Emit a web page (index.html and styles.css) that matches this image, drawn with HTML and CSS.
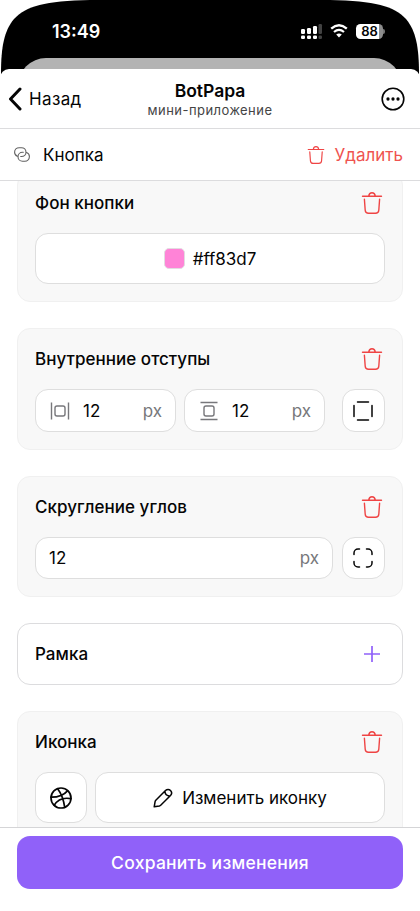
FILE: index.html
```html
<!DOCTYPE html>
<html lang="ru">
<head>
<meta charset="utf-8">
<meta name="viewport" content="width=device-width, initial-scale=1">
<title>BotPapa</title>
<link rel="stylesheet" href="styles.css">
</head>
<body>
<svg class="defs" aria-hidden="true">
  <symbol id="trash" viewBox="0 0 22 24">
    <path d="M1.500 5.300h19M7.700 5.100C8 2.900 9.200 1.700 11 1.700s3 1.200 3.300 3.400M3.400 8.200l.8 11c.2 2.200 1.100 3.100 3.300 3.100h7c2.200 0 3.100-.9 3.300-3.100l.8-11"/>
  </symbol>
</svg>
<div class="phone">
  <div class="status-area">
    <div class="status-bar">
      <span class="time">13:49</span>
      <div class="indicators">
        <svg class="signal" viewBox="0 0 22 16">
          <g fill="#fff"><rect x="0" y="5" width="4" height="5" rx="1.300"/><rect x="6" y="4" width="4" height="6" rx="1.300"/><rect x="12" y="2" width="4" height="8" rx="1.300"/><rect x="0" y="11.500" width="4" height="3.500" rx="1.300"/><rect x="6" y="11.500" width="4" height="3.500" rx="1.300"/><rect x="12" y="11.500" width="4" height="3.500" rx="1.300"/></g>
          <g fill="#424242"><rect x="17.500" y="0" width="3.500" height="10" rx="1.300"/><rect x="17.500" y="11.500" width="3.500" height="3.500" rx="1.300"/></g>
        </svg>
        <svg class="wifi" viewBox="0 0 18 14">
          <path d="M1.200 4.700Q9-2 16.800 4.700" stroke-width="2.400"/><path d="M4 8q5-4.300 10 0" stroke-width="2.200"/><path d="M6.200 10.600Q9 8.400 11.800 10.600L9 13.600z" class="wifi-dot"/>
        </svg>
        <div class="battery"><span>88</span></div><i class="battery-cap"></i>
      </div>
    </div>
    <div class="back-sheet"></div>
  </div>
  <header class="header">
    <div class="back">
      <svg viewBox="0 0 14 24"><path d="M12 2 2.500 12l9.500 10"/></svg>
      <span>Назад</span>
    </div>
    <div class="heading">
      <h1>BotPapa</h1>
      <p>мини-приложение</p>
    </div>
    <svg class="more" viewBox="0 0 24 24"><circle cx="12" cy="12" r="10.800"/><g><circle cx="7" cy="12" r="1.650"/><circle cx="12" cy="12" r="1.650"/><circle cx="17" cy="12" r="1.650"/></g></svg>
  </header>
  <div class="toolbar">
    <svg class="link" viewBox="0 0 16 15"><path d="M3.500 9.300C1.600 8.600.6 7 .6 5.200.6 2.700 2.600.7 5.200.7h2.300c2.500 0 4.500 2 4.500 4.500S10 9.500 7.500 9.500H6.700"/><path d="M12.500 5.500c1.900.7 2.900 2.200 2.900 4 0 2.700-2 4.700-4.600 4.700H8.500C6 14.200 4 12.200 4 9.700s2-4.400 4.500-4.400h.8"/></svg>
    <span class="toolbar-name">Кнопка</span>
    <svg class="trash"><use href="#trash"/></svg>
    <span class="toolbar-delete">Удалить</span>
  </div>
  <main class="content">
    <section class="card card-clipped">
      <div class="card-head"><h2>Фон кнопки</h2><svg class="trash"><use href="#trash"/></svg></div>
      <div class="field color-field tall"><i class="swatch"></i><span>#ff83d7</span></div>
    </section>
    <section class="card">
      <div class="card-head"><h2>Внутренние отступы</h2><svg class="trash"><use href="#trash"/></svg></div>
      <div class="row paddings">
        <div class="field"><svg class="pad-icon" viewBox="0 0 20 20"><path d="M1.500 1.500v17M18.500 1.500v17"/><rect x="5" y="5" width="10" height="10" rx="2"/></svg><span>12</span><em>px</em></div>
        <div class="field"><svg class="pad-icon" viewBox="0 0 20 20"><path d="M1.500 1.500h17M1.500 18.500h17"/><rect x="5" y="5" width="10" height="10" rx="2"/></svg><span>12</span><em>px</em></div>
        <div class="field square"><svg class="side-icon" viewBox="0 0 20 20"><path d="M4.500 1h11M4.500 19h11M1 4.500v11M19 4.500v11"/></svg></div>
      </div>
    </section>
    <section class="card">
      <div class="card-head"><h2>Скругление углов</h2><svg class="trash"><use href="#trash"/></svg></div>
      <div class="row radius-row">
        <div class="field wide"><span>12</span><em>px</em></div>
        <div class="field square"><svg class="side-icon" viewBox="0 0 20 20"><path d="M1 6.500V5a4 4 0 0 1 4-4h1.500M13.500 1H15a4 4 0 0 1 4 4v1.500M19 13.500V15a4 4 0 0 1-4 4h-1.500M6.500 19H5a4 4 0 0 1-4-4v-1.500"/></svg></div>
      </div>
    </section>
    <section class="card card-empty">
      <div class="card-head"><h2>Рамка</h2><svg class="plus" viewBox="0 0 22 22"><path d="M11 3v16M3 11h16"/></svg></div>
    </section>
    <section class="card">
      <div class="card-head"><h2>Иконка</h2><svg class="trash"><use href="#trash"/></svg></div>
      <div class="row icon-row">
        <div class="field square tall"><svg class="ball" viewBox="0 0 22 22"><circle cx="11" cy="11" r="10"/><path d="M7.600 1.700C11 6 13.500 12 14.700 20.300M1 10.200c6.500.1 12.200-1.300 16.500-6.300M4.200 18.300c3.600-6 9-8.100 16.800-6.600"/></svg></div>
        <div class="field change tall"><svg class="pencil" viewBox="0 0 20 20"><path d="M1.200 18.800l.9-5.200c.1-.5.3-.9.7-1.300L12.500 2.500c1.500-1.500 3.600-1.500 5 0s1.400 3.500 0 5L7.700 17.200c-.4.4-.8.600-1.300.7zM11.900 3.200c.2 2.900 2 4.700 4.900 4.900"/></svg><span>Изменить иконку</span></div>
      </div>
    </section>
  </main>
  <footer class="footer"><button>Сохранить изменения</button></footer>
</div>
</body>
</html>
```
FILE: styles.css
```css
* { box-sizing: border-box; margin: 0; }
body { font-family: Inter, "Liberation Sans", sans-serif; font-size: 17px; color: #050505; background: #fff; overflow: hidden; }
svg { display: block; flex: none; fill: none; stroke: currentColor; stroke-linecap: round; stroke-linejoin: round; }
.defs { width: 0; height: 0; position: absolute; }
.phone { width: 420px; height: 911px; display: flex; flex-direction: column; }
.status-area { height: 84px; flex: none; background: #000; clip-path: path("M1 84V74C1 47 4 31 14 19C26 6 45 1 90 0H330C375 1 394 6 406 19C416 31 419 47 419 74V84Z"); overflow: hidden; }
.status-bar { height: 58px; display: flex; justify-content: space-between; align-items: flex-start; padding: 23px 35px 0 52px; }
.time { color: #fff; font-size: 18px; line-height: 18px; font-weight: 600; }
.indicators { display: flex; align-items: flex-start; padding-top: 1px; }
.signal { width: 22px; height: 16px; stroke: none; margin-right: 7px; }
.wifi { width: 18px; height: 14px; margin: 0 8px 0 0; stroke: #fff; stroke-linecap: butt; }
.wifi .wifi-dot { fill: #fff; stroke: none; }
.battery { width: 27px; height: 15px; border-radius: 4.500px; background: linear-gradient(90deg, #fff 86%, #8c8c8c 86%); font-size: 13px; font-weight: 600; line-height: 15px; text-align: center; }
.battery-cap { width: 2px; height: 5px; margin: 5px 0 0 0; background: #777; border-radius: 0 2px 2px 0; }
.back-sheet { height: 40px; margin: 0 18px; background: #b3b3b3; border-radius: 28px 28px 0 0; }
.header { height: 60px; flex: none; margin-top: -15px; background: #fff; border-radius: 9px 9px 0 0; border-bottom: 1px solid #dcdcde; display: grid; grid-template-columns: 1fr auto 1fr; align-items: center; padding: 0 15px 0 8px; position: relative; }
.back { display: flex; align-items: center; gap: 7px; }
.back svg { width: 14px; height: 24px; stroke-width: 3px; }
.back span { font-size: 17px; letter-spacing: .35px; }
.heading { text-align: center; margin-left: 7px; padding-top: 3px; }
h1 { font-size: 17.500px; line-height: 20px; font-weight: 600; }
.heading p { font-size: 13px; line-height: 18px; color: #444; letter-spacing: .45px; }
.more { width: 24px; height: 24px; justify-self: end; stroke-width: 1.600px; }
.more g { fill: currentColor; stroke: none; }
.toolbar { height: 52px; flex: none; background: #fff; border-bottom: 1px solid #dcdcde; display: flex; align-items: center; padding: 0 17px 0 14px; }
.link { width: 16px; height: 15px; color: #606060; stroke-width: 1.100px; margin-right: 13px; }
.toolbar-name { flex: 1; font-size: 17px; }
.trash { width: 22px; height: 24px; color: #ef4444; stroke-width: 1.400px; }
.toolbar .trash { width: 18px; height: 20px; margin-right: 10px; }
.toolbar-delete { color: #ef5350; font-size: 17px; }
.content { flex: 1; min-height: 0; overflow: hidden; padding: 0 17px; }
.card { border: 1px solid #f0f0f0; background: #f8f8f8; border-radius: 13px; padding: 17px; margin-bottom: 26px; }
.card-clipped { margin-top: -9px; }
.card-head { height: 26px; display: flex; align-items: center; justify-content: space-between; margin-bottom: 17px; }
.card-head .trash { margin-right: 2px; }
h2 { font-size: 17px; line-height: 24px; font-weight: 500; letter-spacing: .03px; white-space: nowrap; }
.card-empty { height: 62px; background: #fff; border-color: #dcdcde; }
.card-empty .card-head { margin: 0; }
.plus { width: 22px; height: 22px; color: #9061f9; stroke-width: 1.700px; margin-right: 2px; stroke-linecap: butt; }
.field { height: 43px; display: flex; align-items: center; background: #fff; border: 1px solid #dedede; border-radius: 13px; padding: 0 13px; }
.field em { font-style: normal; color: #77777b; margin-left: auto; }
.field.tall { height: 51px; }
.color-field { justify-content: center; gap: 8px; }
.swatch { width: 21px; height: 21px; border: 1px solid #e3dce1; border-radius: 5px; background: #ff83d7; }
.row { display: flex; }
.paddings .field:not(.square) { width: 141px; margin-right: 8px; }
.paddings .field.square { margin-left: auto; }
.field.square { width: 43px; padding: 0 1px 0 0; justify-content: center; }
.radius-row .field { height: 42px; }
.radius-row { justify-content: space-between; }
.wide { width: 298px; }
.pad-icon { width: 20px; height: 20px; margin: 0 13px 0 1px; color: #77777b; stroke-width: 1.400px; stroke-linecap: butt; }
.side-icon { width: 20px; height: 20px; stroke-width: 1.500px; }
.icon-row { gap: 8px; }
.icon-row .square { width: 52px; padding: 0; }
.change { flex: 1; justify-content: center; gap: 9px; }
.ball { width: 22px; height: 22px; stroke-width: 1.700px; }
.pencil { width: 20px; height: 20px; stroke-width: 1.500px; }
.footer { height: 84px; flex: none; background: #fff; border-top: 1px solid #d5d5d7; padding: 8px 17px 0; }
button { display: block; width: 100%; height: 53px; border: 0; border-radius: 13px; background: #9061f9; color: #fff; font: 500 17.500px Inter, "Liberation Sans", sans-serif; letter-spacing: .25px; }
```
